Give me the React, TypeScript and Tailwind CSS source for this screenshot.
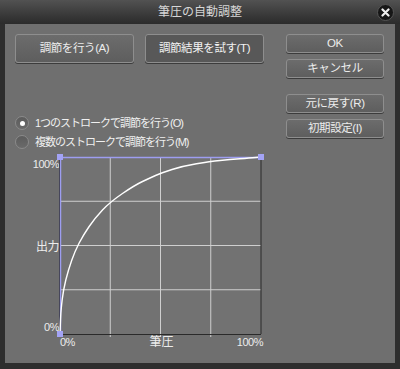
import { useState } from "react";

const pts: [number, number][] = [
  [1, 178], [1.4, 166], [2, 154], [4.3, 134], [9.3, 114], [16, 95], [24.3, 79],
  [36, 62], [51, 46], [76, 29], [91, 22], [102, 17], [124, 10], [151, 5.5],
  [171, 3.5], [191, 2], [202, 1],
];

// smooth the measured points with midpoint quadratics
const smooth = (p: [number, number][]) => {
  let d = `M${p[0][0]},${p[0][1]}`;
  for (let i = 1; i < p.length - 1; i++) {
    const mx = (p[i][0] + p[i + 1][0]) / 2;
    const my = (p[i][1] + p[i + 1][1]) / 2;
    d += ` Q${p[i][0]},${p[i][1]} ${mx},${my}`;
  }
  const last = p[p.length - 1];
  d += ` L${last[0]},${last[1]}`;
  return d;
};

const Btn = ({ label, h, dark }: { label: string; h: string; dark?: boolean }) => (
  <div
    className={`${h} rounded-[3px] border border-[#8e8e8e] shadow-[0_1px_0_#3c3c3c] flex items-center justify-center text-[11.5px] tracking-[-0.4px] ${
      dark
        ? "bg-[#585858] text-[#f2f2f2]"
        : "bg-linear-to-b from-[#6c6c6c] to-[#5e5e5e] text-[#ececec]"
    }`}
  >
    {label}
  </div>
);

const Radio = ({ on, label, onClick }: { on: boolean; label: string; onClick: () => void }) => (
  <div className="flex items-center h-[16px] cursor-default" onClick={onClick}>
    <div className="w-[14px] h-[14px] rounded-full border border-[#8a8a8a] bg-linear-to-b from-[#5c5c5c] to-[#6a6a6a] flex items-center justify-center">
      {on && <div className="w-[5px] h-[5px] rounded-full bg-white" />}
    </div>
    <span className="ml-[6px] text-[11px] text-[#f0f0f0] tracking-[-1px]">{label}</span>
  </div>
);

const Graph = () => {
  const xs = [51.25, 101.5, 151.75];
  const ys = [45.25, 89.5, 133.75];
  return (
    <svg width={204} height={180} className="overflow-visible block">
      <rect x={1} y={1} width={201} height={177} fill="#727272" />
      {xs.map((x) => (
        <line key={x} x1={x} y1={1} x2={x} y2={181} stroke="#cfcfcf" strokeWidth={1} />
      ))}
      {ys.map((y) => (
        <line key={y} x1={1} y1={y} x2={202} y2={y} stroke="#cfcfcf" strokeWidth={1} />
      ))}
      <line x1={202} y1={1} x2={202} y2={178} stroke="#2a2a2a" strokeWidth={1} />
      <line x1={0} y1={178.5} x2={202} y2={178.5} stroke="#2a2a2a" strokeWidth={1} />
      <line x1={0.5} y1={1} x2={0.5} y2={178} stroke="#2a2a2a" strokeWidth={1} />
      <line x1={1.5} y1={1} x2={1.5} y2={178} stroke="#9d9df0" strokeWidth={1.5} />
      <line x1={1} y1={1.5} x2={202} y2={1.5} stroke="#9d9df0" strokeWidth={1.5} />
      <path d={smooth(pts)} fill="none" stroke="#ffffff" strokeWidth={1.4} />
      <rect x={-2} y={-2} width={6} height={6} fill="#a3a3f5" />
      <rect x={199} y={-2} width={6} height={6} fill="#a3a3f5" />
      <rect x={-2} y={175} width={6} height={6} fill="#a3a3f5" />
    </svg>
  );
};

export default function App() {
  const [mode, setMode] = useState(0);
  return (
    <div className="w-[400px] h-[369px] bg-[#2e2e2e] flex flex-col font-['Liberation_Sans','Noto_Sans_CJK_JP',sans-serif] select-none">
      <div className="h-[24px] relative flex items-center justify-center bg-linear-to-b from-[#525252] to-[#2b2b2b] text-[12px] text-[#d6d6d6]">
        筆圧の自動調整
        <div className="absolute right-[6px] top-[4px] w-[17px] h-[17px] rounded-full bg-[#161616] border border-[#555] flex items-center justify-center">
          <svg width="9" height="9" viewBox="0 0 9 9">
            <path d="M1.5 1.5L7.5 7.5M7.5 1.5L1.5 7.5" stroke="#f0f0f0" strokeWidth="2.2" strokeLinecap="round" />
          </svg>
        </div>
      </div>
      <div className="mx-[5px] mb-[6px] flex-1 bg-[#6f6f6f] flex pl-[10px] pt-[10px]">
        <div className="w-[249px] flex flex-col">
          <div className="flex gap-[11px]">
            <div className="w-[119px]">
              <Btn label="調節を行う(A)" h="h-[29px]" />
            </div>
            <div className="w-[119px]">
              <Btn label="調節結果を試す(T)" h="h-[29px]" dark />
            </div>
          </div>
          <div className="mt-[52px] flex flex-col gap-[3px]">
            <Radio on={mode === 0} label="1つのストロークで調節を行う(O)" onClick={() => setMode(0)} />
            <Radio on={mode === 1} label="複数のストロークで調節を行う(M)" onClick={() => setMode(1)} />
          </div>
          <div className="mt-[6px] flex">
            <div className="w-[44px] h-[180px] flex flex-col items-end text-[11px] text-[#ececec] leading-[14px] tracking-[-0.5px]">
              <div className="mt-[1px]">100%</div>
              <div className="mt-[69px] text-[12px]">出力</div>
              <div className="mt-[66px]">0%</div>
            </div>
            <Graph />
          </div>
          <div className="flex ml-[45px] w-[203px] text-[11px] text-[#ececec] leading-[14px] tracking-[-0.5px] -mt-[1px]">
            <div className="w-[40px]">0%</div>
            <div className="flex-1 text-center text-[12px] tracking-normal">筆圧</div>
            <div className="w-[40px] text-right">100%</div>
          </div>
        </div>
        <div className="ml-[22px] w-[98px] flex flex-col">
          <Btn label="OK" h="h-[19px]" />
          <div className="mt-[6px]">
            <Btn label="キャンセル" h="h-[19px]" />
          </div>
          <div className="mt-[16px]">
            <Btn label="元に戻す(R)" h="h-[19px]" />
          </div>
          <div className="mt-[6px]">
            <Btn label="初期設定(I)" h="h-[19px]" />
          </div>
        </div>
      </div>
    </div>
  );
}
